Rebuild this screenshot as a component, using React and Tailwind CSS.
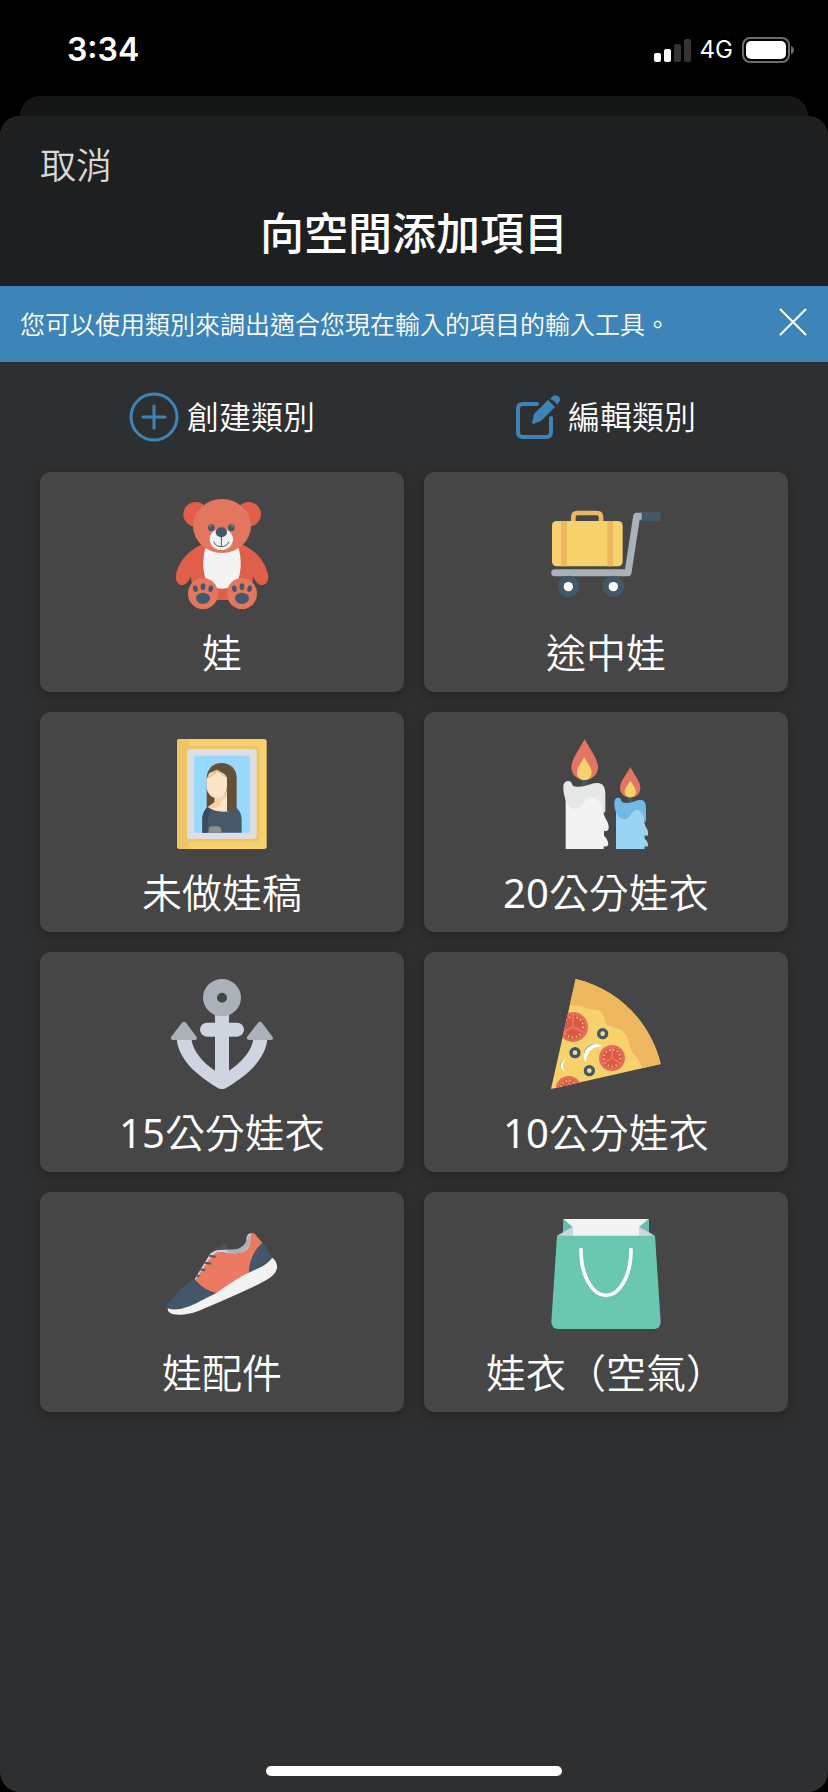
import React, { useState } from 'react';

const BearIcon = () => (
  <svg viewBox="21 42 330 330" className="size-[110px]" aria-hidden="true">
    <circle cx="107" cy="88" r="37" fill="#df5f4a" />
    <circle cx="266" cy="88" r="37" fill="#df5f4a" />
    <path d="M132 176C92 190 56 226 48 270C45 290 56 300 68 300C80 299 88 286 92 274L96 300L160 345H212L276 300L280 274C284 286 292 299 304 300C318 300 327 290 324 270C316 226 280 190 240 176Z" fill="#df5f4a" />
    <path d="M138 184C126 220 127 264 142 295C152 308 168 311 186 311C204 311 220 308 230 295C245 264 246 220 234 184Z" fill="#f3f3f3" />
    <ellipse cx="186" cy="123" rx="87" ry="81" fill="#e2765f" />
    <ellipse cx="184" cy="163" rx="35" ry="32" fill="#f3f3f3" />
    <circle cx="154" cy="128" r="10" fill="#455869" />
    <circle cx="214" cy="128" r="10" fill="#455869" />
    <circle cx="151" cy="124" r="3" fill="#a9866f" />
    <circle cx="217" cy="124" r="3" fill="#a9866f" />
    <path d="M184 155V184M161 170C168 190 200 190 207 170" fill="none" stroke="#455869" strokeWidth="3" />
    <ellipse cx="184" cy="142" rx="17" ry="15" fill="#455869" />
    {[129, 246].map((x) => (
      <g key={x} fill="#455869">
        <ellipse cx={x} cy="326" rx="45" ry="47" fill="#e2765f" />
        <ellipse cx={x} cy="340" rx="21" ry="17" />
        <ellipse cx={x} cy="305" rx="7" ry="10" />
        <ellipse cx={x - 23} cy="311" rx="7" ry="10" transform={`rotate(-12 ${x - 23} 311)`} />
        <ellipse cx={x + 23} cy="311" rx="7" ry="10" transform={`rotate(12 ${x + 23} 311)`} />
      </g>
    ))}
  </svg>
);

const CartIcon = () => (
  <svg viewBox="33 12 330 330" className="size-[110px]" aria-hidden="true">
    <path d="M100 84V66Q100 54 112 54H171Q183 54 183 66V84" fill="none" stroke="#eeb65e" strokeWidth="14" />
    <rect x="36" y="78" width="212" height="136" rx="14" fill="#f7d16c" />
    <path d="M63 78H81V214H63ZM202 78H219V214H202Z" fill="#eeb65e" />
    <path d="M44 233H264L290 64H308" fill="none" stroke="#abb1b8" strokeWidth="21" strokeLinecap="round" strokeLinejoin="round" />
    <path d="M305 51H362V78H305Z" fill="#445769" />
    <circle cx="86" cy="274" r="32" fill="#445769" />
    <circle cx="220" cy="274" r="32" fill="#445769" />
    <circle cx="85" cy="275" r="14" fill="#fff" />
    <circle cx="220" cy="275" r="14" fill="#fff" />
  </svg>
);

const PortraitIcon = () => (
  <svg viewBox="21 42 330 330" className="size-[110px]" aria-hidden="true">
    <rect x="51" y="42" width="269" height="330" rx="8" fill="#f7d16c" />
    <path d="M59 42H88V55Q88 63 96 63H284Q299 63 299 78V335Q299 350 284 350H96Q88 350 88 358V372H59Q51 372 51 364V50Q51 42 59 42Z" fill="#eec566" />
    <rect x="81" y="72" width="209" height="270" rx="10" fill="#dddee2" />
    <rect x="102" y="92" width="168" height="231" rx="5" fill="#97d8fc" />
    <path d="M140 250V158C142 130 160 114 184 114C212 114 230 134 230 158V258H180Z" fill="#645038" />
    <path d="M164 210H201V262H160L143 247L164 231Z" fill="#fae5c8" />
    <path d="M164 219C184 220 194 210 201 196V217C190 221 182 231 181 240C168 250 160 252 143 247L164 233Z" fill="#f4d1a8" />
    <path d="M140 159Q160 152 171 138Q182 150 201 157V187C200 206 186 219 171 219C154 219 140 204 140 185Z" fill="#fae5c8" />
    <path d="M141 159L148 144L171 134L194 148L201 158Q182 151 171 138Q160 151 141 159Z" fill="#f4d1a8" />
    <path d="M127 323V282C128 265 135 252 143 247C165 263 209 265 230 249C239 257 245 270 245 284V323Z" fill="#475969" />
    <path d="M127 323V282C128 265 135 252 143 247L156 255C146 267 143 278 143 292V323Z" fill="#3b4b5d" />
    <path d="M146 323V313Q147 304 157 304H172Q183 305 184 315V323Z" fill="#8f8f91" />
  </svg>
);

const CandlesIcon = () => (
  <svg viewBox="18 42 330 330" className="size-[110px]" aria-hidden="true">
    <path d="M111 158H126V188H111Z" fill="#445769" />
    <path d="M62 215H179C173 245 174 268 181 278C188 290 192 300 191 310C190 320 177 320 177 316V332C184 338 190 349 190 357C189 367 176 366 176 362V372H62Z" fill="#f3f3f3" />
    <path d="M63 228C54 204 54 185 56 178C60 165 76 165 80 174C82 182 85 185 94 185C122 187 131 176 156 174C172 173 180 184 181 204V260L176 264C171 231 154 214 136 216C116 220 114 252 92 252C76 251 67 241 63 228Z" fill="#e6e8e7" />
    <path d="M119 42C106 69 79 101 79 127C79 151 98 165 119 165C140 165 159 151 159 127C159 101 132 69 119 42Z" fill="#e17762" />
    <path d="M118 97C110 113 96 126 96 143C96 156 105 165 118 165C131 165 140 156 140 143C140 126 126 113 118 97Z" fill="#f7d16c" />
    <path d="M249 212H261V236H249Z" fill="#445769" />
    <path d="M213 250H302C297 276 297 292 301 303C308 313 311 322 309 330C306 335 299 332 299 328V341C306 347 310 354 309 362C306 368 299 365 299 361V372H213Z" fill="#9bd4f3" />
    <path d="M213 261C207 246 207 230 210 224C215 216 226 217 228 225C230 232 235 234 248 234C264 233 268 227 284 225C296 224 303 230 303 250V288L299 292C296 267 287 254 274 255C256 259 258 282 238 283C225 282 216 273 213 261Z" fill="#71bae5" />
    <path d="M256 126C247 146 225 167 225 189C225 207 239 217 256 217C273 217 286 207 286 189C286 167 265 146 256 126Z" fill="#e17762" />
    <path d="M256 167C251 178 239 188 239 200C239 211 247 217 256 217C265 217 273 211 273 200C273 188 261 178 256 167Z" fill="#f7d16c" />
  </svg>
);

const AnchorIcon = () => (
  <svg viewBox="21 42 330 330" className="size-[110px]" aria-hidden="true">
    <path d="M165 140H207V317C242 295 277 257 280 220H322C320 265 286 307 247 336C226 352 206 366 191 372H181C166 366 146 352 125 336C86 307 52 265 50 220H94C97 257 130 295 165 317Z" fill="#ced5e0" />
    <rect x="120" y="173" width="132" height="42" rx="21" fill="#ced5e0" />
    <path d="M129 98A57 56 0 1 0 243 98A57 56 0 1 0 129 98ZM171 98A15 15 0 1 1 201 98A15 15 0 1 1 171 98Z" fill="#abb1b8" fillRule="evenodd" />
    <path d="M66 173Q72 168 78 173L110 216Q113 224 105 225H39Q31 224 33 216Z" fill="#abb1b8" />
    <path d="M294 173Q300 168 306 173L338 216Q341 224 333 225H267Q259 224 261 216Z" fill="#abb1b8" />
  </svg>
);

const tomatoes = [
  { x: 99, y: 186, r: 45 },
  { x: 216, y: 279, r: 39 },
  { x: 86, y: 372, r: 39 },
];

const olives = [
  { x: 188, y: 206 },
  { x: 105, y: 263 },
  { x: 148, y: 317 },
];

const PizzaIcon = () => (
  <svg viewBox="33 42 330 330" className="size-[110px]" aria-hidden="true">
    <defs>
      <clipPath id="slice">
        <path d="M107 42C235 72 332 172 362 297L33 372Z" />
      </clipPath>
    </defs>
    <g clipPath="url(#slice)">
      <path d="M33 42H363V372H33Z" fill="#f7d16c" />
      <path d="M85 123C110 120 121 122 135 128C155 137 170 131 181 138C197 150 189 169 204 180C222 190 240 188 252 202C268 221 264 238 275 257C286 275 302 287 309 312L370 310V30H85Z" fill="#eeb65e" />
      {tomatoes.map((t) => (
        <g key={t.y}>
          <circle cx={t.x} cy={t.y} r={t.r} fill="#e26d58" />
          <circle cx={t.x} cy={t.y} r={t.r - 9} fill="#dd5846" />
          <circle cx={t.x} cy={t.y} r={t.r - 14} fill="none" stroke="#f7d16c" strokeWidth="5" strokeDasharray="4 8" />
          <path d={`M${t.x} ${t.y}V${t.y - t.r + 5}M${t.x} ${t.y}L${t.x - t.r + 10} ${t.y + 18}M${t.x} ${t.y}L${t.x + t.r - 10} ${t.y + 18}`} stroke="#e2765f" strokeWidth="6" />
        </g>
      ))}
      {olives.map((o) => (
        <circle key={o.x} cx={o.x} cy={o.y} r="12" fill="#f7dd91" stroke="#445769" strokeWidth="10" />
      ))}
      <path d="M134 289C125 260 139 232 165 236C175 236 182 240 186 246C162 242 140 258 138 290Z" fill="#fff" />
      <path d="M132 270C130 246 148 233 170 237C151 239 136 250 132 270Z" fill="#91c47d" />
      <path d="M78 281C58 286 54 306 77 321C65 307 67 293 78 281Z" fill="#fff" />
      <path d="M74 283C62 286 58 298 63 308C62 297 66 289 74 283Z" fill="#91c47d" />
    </g>
  </svg>
);

const ShoeIcon = () => (
  <svg viewBox="36 27 330 330" className="size-[110px]" aria-hidden="true">
    <path d="M178 118C186 112 192 112 197 110L208 99L215 103L219 125L183 128Z" fill="#445769" />
    <path d="M119 207L165 132C175 122 186 119 198 120L258 118C272 110 275 102 274 87C275 76 281 69 289 70L294 92C288 120 270 133 245 133H190L125 214Z" fill="#ced5e0" />
    <path d="M214 119C242 124 272 114 279 78L285 76C288 110 272 130 238 130C226 129 215 127 214 119Z" fill="#abb1b8" />
    <path d="M121 210C143 180 154 157 170 139C180 128 191 124 206 126C228 132 251 132 268 124C288 114 287 90 287 70C296 67 303 74 307 81L322 98L284 190L181 252L150 245Z" fill="#ec7a62" />
    <path d="M118 206C133 226 156 242 184 249L151 271C110 291 72 308 43 300C35 294 36 284 44 275C66 246 91 221 118 206Z" fill="#445769" />
    <path d="M322 98C331 110 346 128 352 145L281 190C283 153 295 122 322 98Z" fill="#445769" />
    <path d="M38 295C62 304 94 296 135 274L184 249C220 224 250 203 284 187C311 174 336 164 352 143C363 151 367 164 366 174C361 197 340 207 312 222C255 251 199 273 144 297C107 313 78 317 55 313C42 309 38 304 38 295Z" fill="#f2f2f2" />
    <path d="M163 137L182 140M149 158L168 161M133 178L151 181M121 196L133 199" stroke="#445769" strokeWidth="6" />
  </svg>
);

const BagIcon = () => (
  <svg viewBox="33 42 330 330" className="size-[110px]" aria-hidden="true">
    <path d="M70 42H327V93H68Z" fill="#66bfa6" />
    <path d="M70 42H325L297 67V93H99V67Z" fill="#f3f3f3" />
    <path d="M51 92L99 65V94ZM345 92L297 65V94Z" fill="#ced5e0" />
    <path d="M51 92H345L362 350Q362 368 344 372H52Q34 368 34 350Z" fill="#6ac8b0" />
    <path d="M123 134C123 215 158 271 198 271C238 271 273 215 273 134" fill="none" stroke="#fff" strokeWidth="11" strokeLinecap="round" />
  </svg>
);

const categories = [
  { name: '娃', Icon: BearIcon },
  { name: '途中娃', Icon: CartIcon },
  { name: '未做娃稿', Icon: PortraitIcon },
  { size: 20, name: '公分娃衣', Icon: CandlesIcon },
  { size: 15, name: '公分娃衣', Icon: AnchorIcon },
  { size: 10, name: '公分娃衣', Icon: PizzaIcon },
  { name: '娃配件', Icon: ShoeIcon },
  { name: '娃衣（空氣）', Icon: BagIcon },
];

const StatusBar = () => (
  <div className="flex h-24 items-center justify-between pt-1 pr-[33px] pl-[67px] font-['Inter',sans-serif] text-white">
    <span className="text-[32px] leading-10 font-semibold">3:34</span>
    <div className="flex items-center gap-2">
      <svg viewBox="0 0 38 24" className="h-6 w-[38px]" aria-hidden="true">
        <rect x="0" y="15" width="7" height="9" rx="2" fill="#fff" />
        <rect x="10" y="11" width="7" height="13" rx="2" fill="#fff" />
        <rect x="20" y="6" width="7" height="18" rx="2" fill="#333" />
        <rect x="30" y="1" width="7" height="23" rx="2" fill="#333" />
      </svg>
      <span className="text-2xl leading-8 font-normal">4G</span>
      <svg viewBox="0 0 54 26" className="h-[26px] w-[54px]" aria-hidden="true">
        <rect x="2" y="1" width="46" height="24" rx="7" fill="none" stroke="#6b6b6b" strokeWidth="2" />
        <rect x="5" y="4" width="40" height="18" rx="5" fill="#fff" />
        <path d="M50 9Q53 10 53 13Q53 16 50 17Z" fill="#6b6b6b" />
      </svg>
    </div>
  </div>
);

const App = () => {
  const [showTip, setShowTip] = useState(true);

  return (
    <div lang="zh-Hant" className="flex min-h-screen flex-col bg-black font-['Noto_Sans','Noto_Sans_CJK_TC',sans-serif] font-[350] text-white">
      <StatusBar />
      <div className="mx-5 h-5 rounded-t-[20px] bg-[#151716]" />
      <main className="flex grow flex-col overflow-hidden rounded-[20px] bg-[#2e2f31]">
        <header className="flex flex-col bg-[#1e1f21] px-10 pt-6 pb-6">
          <button type="button" className="self-start text-[36px] leading-[52px] text-[#d7d7d7]">
            取消
          </button>
          <h1 className="pt-3 text-center text-[44px] leading-[58px] font-medium">向空間添加項目</h1>
        </header>
        {showTip && (
          <div className="flex h-[76px] items-center justify-between bg-[#3d85b8] px-5">
            <p className="text-[25px] leading-9">您可以使用類別來調出適合您現在輸入的項目的輸入工具。</p>
            <button type="button" aria-label="關閉" className="pb-1" onClick={() => setShowTip(false)}>
              <svg viewBox="0 0 30 30" className="size-[30px]" fill="none" stroke="#fff" strokeWidth="2">
                <path d="M2 2L28 28M28 2L2 28" />
              </svg>
            </button>
          </div>
        )}
        <div className="grid h-[110px] grid-cols-2 gap-5 px-10 text-[32px] leading-[48px]">
          <button type="button" className="flex items-center justify-center gap-2">
            <svg viewBox="0 0 50 50" className="size-[50px]" fill="none" stroke="#3d85b8" strokeLinecap="round" aria-hidden="true">
              <circle cx="25" cy="25" r="23" strokeWidth="3" />
              <path d="M14 25H36M25 14V36" strokeWidth="3" />
            </svg>
            創建類別
          </button>
          <button type="button" className="flex items-center justify-center gap-2">
            <svg viewBox="0 0 44 44" className="size-11" aria-hidden="true">
              <path d="M21 9H7Q2 9 2 14V37Q2 42 7 42H30Q35 42 35 37V23" fill="none" stroke="#3d85b8" strokeWidth="4" strokeLinecap="round" />
              <path d="M16 28L18 19L32 5L39 12L25 26L17 29Z" fill="#3d85b8" />
              <path d="M34 4L37 1Q40 -1 43 2Q45 5 43 7L41 10Q40 6 34 4Z" fill="#3d85b8" />
            </svg>
            編輯類別
          </button>
        </div>
        <div className="grid grid-cols-2 gap-5 px-10">
          {categories.map(({ size, name, Icon }) => (
            <button
              key={`${size}-${name}`}
              type="button"
              className="flex h-[220px] flex-col items-center rounded-[10px] bg-[#464646] pt-[27px] shadow-[0_4px_14px_rgba(0,0,0,0.25)]"
            >
              <Icon />
              <span className="pt-4 text-[40px] leading-[56px]">
                {size && <span className="font-normal">{size}</span>}
                {name}
              </span>
            </button>
          ))}
        </div>
        <div className="mx-auto mt-auto mb-4 h-[10px] w-[296px] rounded-full bg-white" />
      </main>
    </div>
  );
};

export default App;
